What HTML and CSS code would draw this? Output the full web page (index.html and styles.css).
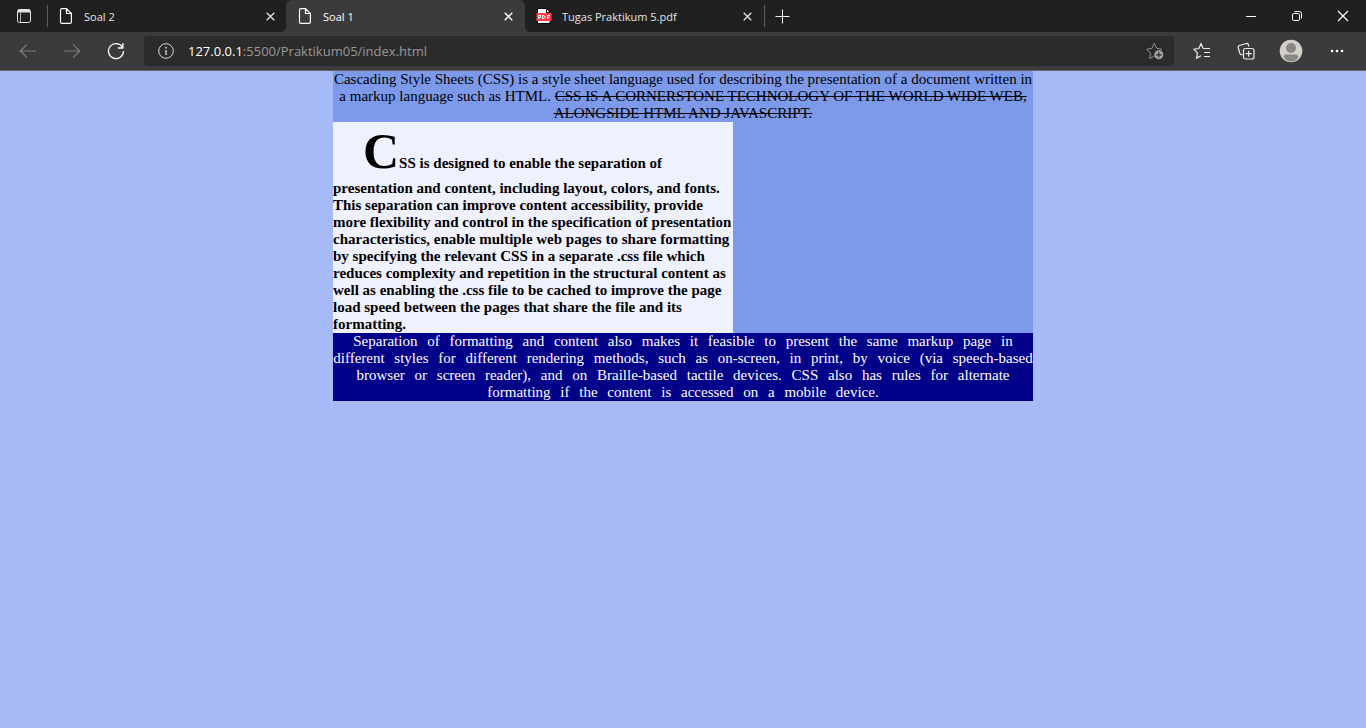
FILE: index.html
```html
<!DOCTYPE html>
<html lang="en">
<head>
<meta charset="utf-8">
<title>Soal 1</title>
<link rel="stylesheet" href="styles.css">
</head>
<body>
<header class="browser">
  <div class="tabbar">
    <button class="tab-actions" aria-label="Tab actions">
      <svg width="16" height="16" viewBox="0 0 16 16" fill="none" stroke="#e4e4e4"><rect x="1.5" y="1.5" width="13" height="13" rx="2"/><path d="M2 3h12" stroke-width="3"/><path d="M4.500 4v10" stroke="#b0b0b0"/></svg>
    </button>
    <div class="tab">
      <svg class="favicon" width="16" height="16" viewBox="0 0 16 16" fill="none" stroke="#fff" stroke-width="1.2"><path d="M4 .6h4.500l4.900 4.900v8.400q0 1.500-1.500 1.500H4q-1.500 0-1.500-1.500V2.100Q2.500.6 4 .6zM8.500.6v4.900h4.900"/></svg>
      <a class="tab-title" href="#soal2">Soal 2</a>
      <button class="tab-close" aria-label="Close Soal 2"><svg width="9" height="9" viewBox="0 0 9 9" stroke="#e4e4e4" stroke-width="1.300"><path d="M.7.7l7.600 7.600M8.300.7L.7 8.300"/></svg></button>
    </div>
    <div class="tab tab-active">
      <svg class="favicon" width="16" height="16" viewBox="0 0 16 16" fill="none" stroke="#fff" stroke-width="1.2"><path d="M4 .6h4.500l4.900 4.900v8.400q0 1.500-1.500 1.500H4q-1.500 0-1.500-1.500V2.100Q2.500.6 4 .6zM8.500.6v4.900h4.900"/></svg>
      <a class="tab-title" href="#soal1">Soal 1</a>
      <button class="tab-close" aria-label="Close Soal 1"><svg width="9" height="9" viewBox="0 0 9 9" stroke="#fff" stroke-width="1.300"><path d="M.7.7l7.600 7.600M8.300.7L.7 8.300"/></svg></button>
    </div>
    <div class="tab">
      <svg class="favicon" width="16" height="16" viewBox="0 0 16 16"><path d="M1.500.5h9l3.500 3.500v11.500H1.500z" fill="#fff" stroke="#000"/><path d="M10.500 1v3.500H14" fill="none" stroke="#000"/><path d="M.5 5h15v8H.5z" fill="#fb4348"/><path d="M2.600 11V7.500h1.900v2H2.600M6.600 7.500v3h1.300l.8-.8V8.300l-.8-.8zM11.500 11V7.500H14M11.500 9.300h2" fill="none" stroke="#fff"/></svg>
      <a class="tab-title" href="#pdf">Tugas Praktikum 5.pdf</a>
      <button class="tab-close" aria-label="Close Tugas Praktikum 5.pdf"><svg width="9" height="9" viewBox="0 0 9 9" stroke="#e4e4e4" stroke-width="1.300"><path d="M.7.7l7.600 7.600M8.300.7L.7 8.300"/></svg></button>
    </div>
    <button class="new-tab" aria-label="New tab"><svg width="15" height="15" viewBox="0 0 15 15" stroke="#f0f0f0"><path d="M7.500.5v14M.5 7.500h14"/></svg></button>
    <div class="window-controls">
      <button aria-label="Minimize"><svg width="12" height="12" viewBox="0 0 12 12" stroke="#fff"><path d="M1 6.500h10"/></svg></button>
      <button aria-label="Restore"><svg width="12" height="12" viewBox="0 0 12 12" fill="none" stroke="#fff"><rect x="1.500" y="3.500" width="7" height="7" rx="1.200"/><path d="M3.500 1.500h5q2 0 2 2v5"/></svg></button>
      <button aria-label="Close"><svg width="12" height="12" viewBox="0 0 12 12" stroke="#fff" stroke-width="1.200"><path d="M1 1l10 10M11 1L1 11"/></svg></button>
    </div>
  </div>
  <div class="toolbar">
    <nav class="nav-buttons">
      <button aria-label="Back"><svg width="18" height="16" viewBox="0 0 18 16" fill="none" stroke="#7c7c7c" stroke-width="1.200"><path d="M17 8H1.500M8 1.300L1.300 8 8 14.700"/></svg></button>
      <button aria-label="Forward"><svg width="18" height="16" viewBox="0 0 18 16" fill="none" stroke="#7c7c7c" stroke-width="1.200"><path d="M1 8h15.500M10 1.300L16.700 8 10 14.700"/></svg></button>
      <button aria-label="Refresh"><svg width="18" height="18" viewBox="0 0 18 18" fill="none" stroke="#fff" stroke-width="1.300"><path d="M15.600 5.500A7.500 7.500 0 1 0 16.500 9M15.900 1v5h-5"/></svg></button>
    </nav>
    <div class="address">
      <button class="site-info" aria-label="Site information"><svg width="16" height="16" viewBox="0 0 16 16" fill="none" stroke="#d8d8d8"><circle cx="8" cy="8" r="7.300"/><path d="M8 7v5" stroke-width="1.400"/><circle cx="8" cy="4.700" r=".9" fill="#d8d8d8" stroke="none"/></svg></button>
      <a class="url" href="#soal1"><span class="host">127.0.0.1</span>:5500/Praktikum05/index.html</a>
      <button class="add-favorite" aria-label="Add to favorites"><svg width="18" height="18" viewBox="0 0 18 18" fill="none" stroke="#929292"><path d="M8.300 14.200l-4.600 2.300.8-5.300L.8 7.300l5-.9L8.300 1.200l2.500 5.200 4.800.8-1.500 1.500"/><circle cx="12.800" cy="12.800" r="4.500" fill="#a4a4a4" stroke="none"/><path d="M12.800 10v5.600M10 12.800h5.600" stroke="#2b2b2b" stroke-width="1.200"/></svg></button>
    </div>
    <div class="tools">
      <button aria-label="Favorites"><svg width="18" height="18" viewBox="0 0 18 18" fill="none" stroke="#eee" stroke-width="1.200"><path d="M11.500 6.500l-1.400-.2L8 1.700 5.800 6.500l-4.900.7 3.500 3.700-.8 5.200 4.400-2.400M11 6.500h6M11 10.500h6M11 14.500h6"/></svg></button>
      <button aria-label="Collections"><svg width="18" height="18" viewBox="0 0 18 18" fill="none" stroke="#eee" stroke-width="1.200"><path d="M5.500 13l-1.800-.6q-.7-.3-.9-1L1.200 5.500Q.8 4 2.300 3.500l7-2q1.500-.4 2 1l.6 2.200"/><rect x="6.500" y="6.500" width="10.500" height="10.500" rx="2"/><path d="M11.700 8.700v6M8.700 11.700h6"/></svg></button>
      <button class="tool-wide" aria-label="Profile"><svg width="24" height="24" viewBox="0 0 24 24"><circle cx="12" cy="12" r="11.300" fill="#d3d0cc"/><circle cx="12" cy="9" r="5" fill="#8a8682"/><path d="M4.500 18q0-2.500 3-2.500h9q3 0 3 2.500-3 4.500-7.500 4.500T4.500 18z" fill="#8a8682"/></svg></button>
      <button class="tool-wide" aria-label="Settings and more"><svg width="14" height="4" viewBox="0 0 14 4" fill="#fff"><circle cx="2" cy="2" r="1.300"/><circle cx="7" cy="2" r="1.300"/><circle cx="12" cy="2" r="1.300"/></svg></button>
    </div>
  </div>
</header>
<main class="page">
  <article class="container">
    <p class="intro">Cascading Style Sheets (CSS) is a style sheet language used for describing the presentation of a document written in a markup language such as HTML. <s class="cornerstone">CSS is a cornerstone technology of the World Wide Web, alongside HTML and JavaScript.</s></p>
    <p class="design">CSS is designed to enable the separation of presentation and content, including layout, colors, and fonts. This separation can improve content accessibility, provide more flexibility and control in the specification of presentation characteristics, enable multiple web pages to share formatting by specifying the relevant CSS in a separate .css file which reduces complexity and repetition in the structural content as well as enabling the .css file to be cached to improve the page load speed between the pages that share the file and its formatting.</p>
    <p class="separation">Separation of formatting and content also makes it feasible to present the same markup page in different styles for different rendering methods, such as on-screen, in print, by voice (via speech-based browser or screen reader), and on Braille-based tactile devices. CSS also has rules for alternate formatting if the content is accessed on a mobile device.</p>
  </article>
</main>
</body>
</html>
```
FILE: styles.css
```css
* { box-sizing: border-box; }
body {
  margin: 0;
  min-height: 100vh;
  display: flex;
  flex-direction: column;
  background: #a5baf7;
}
button {
  display: flex;
  align-items: center;
  justify-content: center;
  flex: none;
  margin: 0;
  padding: 0;
  border: 0;
  background: none;
}
svg { display: block; flex: none; }
a { color: inherit; text-decoration: none; }

.browser {
  font-family: "Open Sans", "Noto Sans", sans-serif;
  background: #3b3b3b;
  border-bottom: 1px solid #686868;
}
.tabbar {
  display: flex;
  height: 32px;
  background: #3b3b3b;
}
.tab-actions {
  width: 48px;
  background: #202020;
  border-right: 1px solid;
  border-image: linear-gradient(#202020 6px, #5f5f5f 6px, #5f5f5f 26px, #202020 26px) 1;
}
.tab {
  display: flex;
  align-items: center;
  width: 239px;
  padding: 0 12px 0 10px;
  background: #202020;
  color: #e4e4e4;
  font-size: 11px;
}
.tab:first-of-type {
  width: 238px;
  padding-right: 11px;
  border-bottom-right-radius: 5px;
}
.tab-active {
  position: relative;
  z-index: 0;
  padding-left: 11px;
  color: #fff;
  background: linear-gradient(#202020, #202020) top / 100% 6px no-repeat #3b3b3b;
}
.tab-active::before {
  content: "";
  position: absolute;
  inset: 0;
  z-index: -1;
  background: #3b3b3b;
  border-radius: 6px 6px 0 0;
}
.tab-active + .tab {
  padding-left: 11px;
  border-bottom-left-radius: 5px;
}
.tab-title {
  flex: 1;
  padding-left: 10px;
  white-space: nowrap;
}
.tab-close { width: 9px; height: 16px; }
.new-tab {
  width: 36px;
  background: #202020;
  border-left: 1px solid;
  border-image: linear-gradient(#202020 6px, #5f5f5f 6px, #5f5f5f 26px, #202020 26px) 1;
}
.window-controls {
  display: flex;
  flex: 1;
  justify-content: flex-end;
  background: #202020;
}
.window-controls button { width: 46px; }

.toolbar {
  display: flex;
  align-items: center;
  height: 38px;
}
.nav-buttons { display: flex; padding: 0 6px; }
.nav-buttons button { width: 44px; height: 30px; }
.address {
  display: flex;
  align-items: center;
  flex: 1;
  height: 30px;
  padding: 0 10px 0 14px;
  border-radius: 4px;
  background: #2b2b2b;
}
.url {
  flex: 1;
  padding-left: 14px;
  color: #989898;
  font-size: 13px;
}
.host { color: #fff; }
.tools { display: flex; padding: 0 6px; }
.tools button { width: 44px; height: 30px; }
.tools .tool-wide { width: 46px; }

.page {
  font-family: "Liberation Serif", "Times New Roman", serif;
  font-size: 15px;
  line-height: 17px;
  color: #000;
}
.container {
  max-width: 700px;
  margin: 0 auto;
  background: #7d9aea;
  text-align: center;
}
.intro, .design, .separation { margin: 0; }
.cornerstone { text-transform: uppercase; }
.design {
  max-width: 400px;
  background: #f0f1ff;
  font-weight: bold;
  text-align: left;
  text-indent: 30px;
}
.design::first-letter {
  font-size: 50px;
  line-height: 58px;
}
.separation {
  background: #000088;
  color: #fff;
  word-spacing: 6px;
}
```
